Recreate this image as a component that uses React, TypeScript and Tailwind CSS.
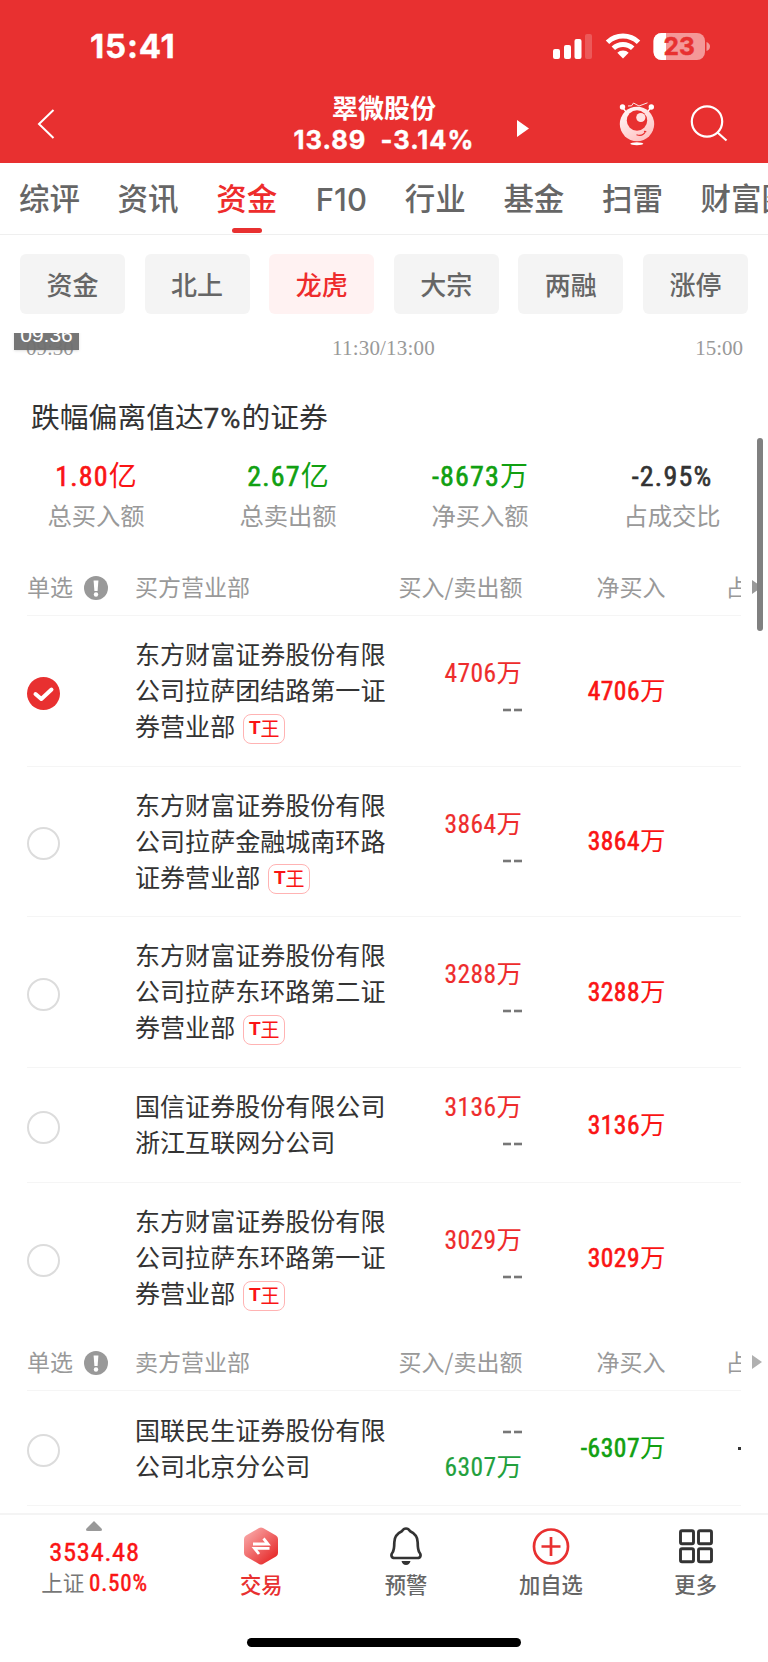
import React from "react";

const sans = "font-['Noto_Sans_CJK_SC',sans-serif]";
const din = "font-['Roboto_Condensed','Noto_Sans_CJK_SC',sans-serif]";
const inter = "font-['Inter','Noto_Sans_CJK_SC',sans-serif]";

function StatusBar() {
  return (
    <div className="flex h-[86px] items-center pt-[7px] pl-[90px] text-white">
      <span className="w-[463px] text-[33px] leading-none font-bold tracking-[0.8px] [-webkit-text-stroke:0.4px_currentColor]">15:41</span>
      <svg className="h-[28px] w-[158px]" viewBox="0 0 158 28" fill="currentColor">
        <rect x="0" y="16" width="7" height="10" rx="2" />
        <rect x="11" y="12" width="7" height="14" rx="2" />
        <rect x="21.500" y="6" width="7" height="20" rx="2" />
        <rect x="32" y="1" width="7" height="25" rx="2" opacity="0.2" />
        <g fill="none" stroke="currentColor" strokeWidth="5">
          <path d="M54.500 9.300 A22.500 22.500 0 0 1 85.500 9.300" />
          <path d="M60.300 15.300 A14 14 0 0 1 79.700 15.300" />
        </g>
        <path d="M70 25.500 L64.300 19.800 A8 8 0 0 1 75.700 19.800 Z" />
        <rect x="100.500" y="0" width="51.500" height="27" rx="8" opacity="0.5" />
        <path d="M113 0 h-4.500 a8 8 0 0 0 -8 8 v11 a8 8 0 0 0 8 8 h4.500 z" />
        <path d="M153.500 9 q3.500 1.500 3.500 4.500 t-3.500 4.500 z" opacity="0.5" />
        <text x="126.200" y="22" fill="#e83030" stroke="#e83030" strokeWidth="0.500" fontSize="24.500" fontWeight="700" textAnchor="middle">23</text>
      </svg>
    </div>
  );
}

function Robot() {
  return (
    <svg className="h-[44px] w-[36px]" viewBox="0 0 36 44" fill="none">
      <defs>
        <linearGradient id="robot" x1="0" y1="0" x2="0.6" y2="1">
          <stop offset="0" stopColor="#fff" />
          <stop offset="1" stopColor="#ffc3c3" />
        </linearGradient>
      </defs>
      <path d="M3.500 5.500 L8 11 M32 5.500 L27.500 11" stroke="#fff" strokeWidth="1.300" />
      <circle cx="3.500" cy="5" r="2.700" fill="#fff" />
      <circle cx="32.300" cy="5" r="2.700" fill="#fff" />
      <path d="M9 4 L12.500 3.800 L14.500 1 L20 4 L28.500 0.800" stroke="#fff" strokeWidth="0.900" />
      <circle cx="18" cy="22" r="17.200" fill="url(#robot)" />
      <circle cx="18" cy="18.500" r="10.200" fill="#e83030" />
      <circle cx="21.800" cy="15.500" r="4.600" fill="#ffe3e3" />
      <path d="M17.500 32.800 Q24 35 26.500 29.300 M25 29.300 L27.300 29.700" stroke="#e83030" strokeWidth="1.200" />
      <ellipse cx="17.800" cy="41.700" rx="6.500" ry="1.500" fill="#fff" />
    </svg>
  );
}

function Header() {
  return (
    <header className={`h-[163px] shrink-0 bg-[#e83030] ${inter}`}>
      <StatusBar />
      <div className="flex h-[77px] text-white">
        <svg className="mt-[23px] ml-[37px] h-[30px] w-[18px]" viewBox="0 0 18 30" fill="none" stroke="currentColor" strokeWidth="2">
          <path d="M16.500 1 L2 15 L16.500 29" />
        </svg>
        <div className="ml-[209px] flex w-[240px] flex-col items-center pt-[6px] font-bold">
          <span className="text-[26px] leading-[34px]">翠微股份</span>
          <span className="mt-[-1px] text-[25.5px] leading-[30px] tracking-[1px] whitespace-pre [-webkit-text-stroke:0.4px_currentColor]">13.89  -3.14%</span>
        </div>
        <svg className="mt-[34px] ml-[13px] h-[17px] w-[12px]" viewBox="0 0 12 17" fill="currentColor">
          <path d="M0 0 L12 8.500 L0 17 Z" />
        </svg>
        <div className="mt-[16px] ml-[90px]">
          <Robot />
        </div>
        <svg className="mt-[19px] ml-[35px] h-[38px] w-[38px]" viewBox="0 0 38 38" fill="none" stroke="currentColor" strokeWidth="2.200">
          <circle cx="17" cy="16.500" r="15.200" />
          <path d="M27.500 27.500 L36.500 35.500" />
        </svg>
      </div>
    </header>
  );
}

const tabs = ["综评", "资讯", "资金", "F10", "行业", "基金", "扫雷", "财富圈"];

function Tabs() {
  return (
    <nav className="flex h-[72px] shrink-0 overflow-hidden border-b border-[#efefef] pl-[19px] text-[30.5px] font-medium text-[#666]">
      {tabs.map((t) =>
        t === "F10" ? (
          <span key={t} className="w-[90px] shrink-0 pl-px font-['Inter'] text-[31px] leading-[73px]">
            {t}
          </span>
        ) : (
          <div key={t} className={`flex w-[98.6px] shrink-0 flex-col whitespace-nowrap ${t === "资金" ? "text-[#ee2c2c]" : ""}`}>
            <span className="h-[65px] leading-[69px]">{t}</span>
            {t === "资金" && <i className="ml-[16px] h-[5px] w-[30px] rounded-full bg-[#e83030]" />}
          </div>
        ),
      )}
    </nav>
  );
}

const chips = ["资金", "北上", "龙虎", "大宗", "两融", "涨停"];

function Chips() {
  return (
    <div className="flex h-[98px] shrink-0 justify-between px-[20px] pt-[19px]">
      {chips.map((c) => (
        <span
          key={c}
          className={`flex h-[60px] w-[105px] items-center justify-center rounded-[6px] pb-[2px] text-[26px] font-medium ${
            c === "龙虎" ? "bg-[#fff2f2] text-[#ee2c2c]" : "bg-[#f4f4f4] text-[#666]"
          }`}
        >
          {c}
        </span>
      ))}
    </div>
  );
}

function TimeAxis() {
  return (
    <div className="relative flex h-[48px] shrink-0 justify-between overflow-hidden pr-[25px] pl-[26px] font-['Liberation_Serif',serif] text-[21px] leading-[31px] text-[#999]">
      <span>09:30</span>
      <span className="mr-[2px] tracking-[0.2px]">11:30/13:00</span>
      <span>15:00</span>
      <span className="absolute -top-[14px] left-[14px] h-[31px] w-[65px] bg-[#6f6f6f]/95 text-center font-['Liberation_Sans'] text-[21px] leading-[32px] text-white shadow">
        09:36
      </span>
    </div>
  );
}

const stats = [
  ["1.80亿", "总买入额", "text-[#fa1414]"],
  ["2.67亿", "总卖出额", "text-[#11a011]"],
  ["-8673万", "净买入额", "text-[#11a011]"],
  ["-2.95%", "占成交比", "text-[#333]"],
];

function Summary() {
  return (
    <section className="h-[149px] shrink-0">
      <h2 className="h-[75px] pl-[31px] text-[28.8px] leading-[70px] text-[#333]">
        跌幅偏离值达<span className="font-['Roboto'] text-[27.5px] tracking-[1px] [-webkit-text-stroke:0.4px_currentColor]">7%</span>的证券
      </h2>
      <div className="grid grid-cols-4">
        {stats.map(([value, label, tone]) => (
          <div key={label} className="flex flex-col items-center">
            <span className={`h-[41px] text-[28px] leading-[42px] tracking-[1.2px] ${din} ${tone}`}>
              <Amount text={value} bold />
            </span>
            <span className="text-[24.3px] leading-[36px] text-[#999]">{label}</span>
          </div>
        ))}
      </div>
    </section>
  );
}

function Amount({ text, bold }: { text: string; bold?: boolean }) {
  const unit = /[亿万]$/.test(text) ? text.slice(-1) : "";
  const digits = unit ? text.slice(0, -1) : text;
  return (
    <>
      <span className={bold ? "[-webkit-text-stroke:0.6px_currentColor]" : "[-webkit-text-stroke:0.2px_currentColor]"}>{digits}</span>
      {unit && <span className="tracking-normal">{unit}</span>}
    </>
  );
}

function TableHead({ title, first }: { title: string; first?: boolean }) {
  return (
    <div className="mr-[27px] ml-[27px] flex h-[58px] shrink-0 items-center border-b border-[#f5f5f5] text-[23px] text-[#999]">
      <span className="w-[57px] whitespace-nowrap">单选</span>
      <svg className="mt-[3px] h-[24px] w-[24px]" viewBox="0 0 24 24">
        <circle cx="12" cy="12" r="12" fill="#999" />
        <path d="M9.600 4.500 h4.800 l-0.800 10.500 h-3.200 z" fill="#fff" />
        <circle cx="12" cy="18.500" r="2.200" fill="#fff" />
      </svg>
      <span className="ml-[27px] w-[240.5px]">{title}</span>
      <span className="w-[147px] text-right whitespace-nowrap">买入/卖出额</span>
      <span className="w-[143px] text-right">净买入</span>
      <span className="ml-[60px] w-[15.5px] overflow-hidden whitespace-nowrap">占比</span>
      <svg className="-mr-[21px] ml-[11px] h-[14px] w-[10px] shrink-0" viewBox="0 0 10 14" fill={first ? "#999" : "#b0b0b0"}>
        <path d="M0 0 L10 7 L0 14 Z" />
      </svg>
    </div>
  );
}

type Row = { lines: string[]; tag?: boolean; buy: string; sell: string; net: string; checked?: boolean };

const buyers: Row[] = [
  { lines: ["东方财富证券股份有限", "公司拉萨团结路第一证", "券营业部"], tag: true, buy: "4706万", sell: "--", net: "4706万", checked: true },
  { lines: ["东方财富证券股份有限", "公司拉萨金融城南环路", "证券营业部"], tag: true, buy: "3864万", sell: "--", net: "3864万" },
  { lines: ["东方财富证券股份有限", "公司拉萨东环路第二证", "券营业部"], tag: true, buy: "3288万", sell: "--", net: "3288万" },
  { lines: ["国信证券股份有限公司", "浙江互联网分公司"], buy: "3136万", sell: "--", net: "3136万" },
  { lines: ["东方财富证券股份有限", "公司拉萨东环路第一证", "券营业部"], tag: true, buy: "3029万", sell: "--", net: "3029万" },
];

const sellers: Row[] = [{ lines: ["国联民生证券股份有限", "公司北京分公司"], buy: "--", sell: "6307万", net: "-6307万" }];

function Value({ text, tone }: { text: string; tone: string }) {
  return text === "--" ? (
    <span className="flex h-[36px] items-center justify-end text-[#777]">
      <svg className="mt-[2px] h-[4px] w-[19px]" viewBox="0 0 19 4" fill="currentColor">
        <rect x="0" y="0.700" width="8" height="2.600" />
        <rect x="11" y="0.700" width="8" height="2.600" />
      </svg>
    </span>
  ) : (
    <span className={`h-[36px] leading-[36px] ${tone}`}>
      <Amount text={text} />
    </span>
  );
}

function BranchRow({ row, last }: { row: Row; last?: boolean }) {
  const height = row.lines.length === 3 ? "h-[150.5px]" : "h-[115px]";
  return (
    <div className={`mx-[27px] flex shrink-0 items-center ${height} ${last ? "" : "border-b border-[#f5f5f5]"}`}>
      <div className="w-[108px] pt-[5px]">
        {row.checked ? (
          <svg className="h-[33px] w-[33px]" viewBox="0 0 33 33">
            <circle cx="16.500" cy="16.500" r="16.500" fill="#e83030" />
            <path d="M8.500 17 L14.300 22 L24.500 12.500" fill="none" stroke="#fff" strokeWidth="4" strokeLinecap="round" strokeLinejoin="round" />
          </svg>
        ) : (
          <i className="block h-[33px] w-[33px] rounded-full border-2 border-[#dcdcdc]" />
        )}
      </div>
      <div className="w-[257px] pb-[3px] text-[25.05px] leading-[36px] text-[#333]">
        {row.lines.map((line, i) => (
          <div key={line} className="flex h-[36px] items-center whitespace-nowrap">
            {line}
            {row.tag && i === row.lines.length - 1 && (
              <span className="mt-[7px] ml-[8px] flex h-[30px] w-[42px] items-center justify-center rounded-[8px] border border-[#ffb3b3] pb-[2px] text-[19px] text-[#fa1414]">
                <b className="font-['Liberation_Sans'] text-[19px]">T</b>王
              </span>
            )}
          </div>
        ))}
      </div>
      <div className={`flex w-[130px] flex-col pt-[1px] text-right text-[25.5px] tracking-[0.4px] ${din}`}>
        <Value text={row.buy} tone="text-[#ee2c2c]" />
        <Value text={row.sell} tone="text-[#22a03c]" />
      </div>
      <div className={`w-[143.5px] text-right text-[25.5px] leading-[36px] tracking-[0.5px] ${din} ${row.net[0] === "-" ? "text-[#11a011]" : "text-[#fa1414]"}`}>
        <Amount text={row.net} bold />
      </div>
      {row.net[0] === "-" && <i className="mb-[-1px] ml-auto h-[3px] w-[3px] bg-[#333]" />}
    </div>
  );
}

function BarItem({ label, tone, children }: { label: string; tone: string; children: React.ReactNode }) {
  return (
    <div className={`flex w-[144.800px] flex-col items-center pt-[12px] text-[21.3px] font-medium ${tone}`}>
      <div className="h-[41px]">{children}</div>
      <span className="leading-[32px]">{label}</span>
    </div>
  );
}

function BottomBar() {
  return (
    <footer className="flex h-[149px] shrink-0 flex-col border-t-2 border-[#f4f4f4]">
      <div className="flex h-[123px]">
        <div className={`flex w-[189px] flex-col items-center pt-[6px] ${din}`}>
          <svg className="h-[10px] w-[16px]" viewBox="0 0 16 10" fill="#999">
            <path d="M8 0 L15.500 7.500 Q17 10 14 10 H2 Q-1 10 0.500 7.500 Z" />
          </svg>
          <span className="mt-[3px] text-[26.5px] leading-[36px] tracking-[0.7px] text-[#fa1414] [-webkit-text-stroke:0.4px_currentColor]">3534.48</span>
          <span className="mt-[-2px] text-[21.5px] leading-[32px] text-[#777]">
            上证 <span className="text-[23px] tracking-[0.8px] text-[#fa1414] [-webkit-text-stroke:0.5px_currentColor]">0.50%</span>
          </span>
        </div>
        <BarItem label="交易" tone="text-[#e83030]">
          <svg className="h-[38px] w-[34px]" viewBox="0 0 34 38">
            <defs>
              <linearGradient id="hex" x1="0" y1="0" x2="0.9" y2="1">
                <stop offset="0" stopColor="#fbb5b5" />
                <stop offset="1" stopColor="#e51f1f" />
              </linearGradient>
            </defs>
            <path d="M15 1 Q17 0 19 1 L32 8.500 Q34 9.500 34 12 V26 Q34 28.500 32 29.500 L19 37 Q17 38 15 37 L2 29.500 Q0 28.500 0 26 V12 Q0 9.500 2 8.500 Z" fill="url(#hex)" />
            <path d="M9 17 H24 L19.500 11.500 M25.500 21.300 H10.500 L15 27" fill="none" stroke="#fff" strokeWidth="2.800" />
          </svg>
        </BarItem>
        <BarItem label="预警" tone="text-[#666]">
          <svg className="h-[38px] w-[32px]" viewBox="0 0 32 38">
            <path d="M16 1.500 C14 1.500 12.800 2.700 11.800 4.300 C6.500 6.800 4.300 10.500 4.300 15.500 C4.300 22 4 23.500 2.500 25.500 C0.500 28 1.500 31 4.500 31 H27.500 C30.500 31 31.500 28 29.500 25.500 C28 23.500 27.700 22 27.700 15.500 C27.700 10.500 25.500 6.800 20.200 4.300 C19.200 2.700 18 1.500 16 1.500 Z" fill="none" stroke="#333" strokeWidth="2.700" />
            <path d="M11.500 34 H20.500 Q19.500 38 16 38 Q12.500 38 11.500 34 Z" fill="#333" />
          </svg>
        </BarItem>
        <BarItem label="加自选" tone="text-[#666]">
          <svg className="h-[38px] w-[38px]" viewBox="0 0 38 38" fill="none" stroke="#e83030" strokeWidth="2.700">
            <circle cx="19" cy="19.500" r="17" />
            <path d="M9.500 19.500 H28.500 M19 10 V29" />
          </svg>
        </BarItem>
        <BarItem label="更多" tone="text-[#666]">
          <svg className="h-[38px] w-[36px]" viewBox="0 0 36 38" fill="none" stroke="#333" strokeWidth="2.900">
            <rect x="2.500" y="3.700" width="13" height="13" rx="1.500" />
            <rect x="20.500" y="3.700" width="13" height="13" rx="1.500" />
            <rect x="2.500" y="21.700" width="13" height="13" rx="1.500" />
            <rect x="20.500" y="21.700" width="13" height="13" rx="1.500" />
          </svg>
        </BarItem>
      </div>
      <div className="mx-auto h-[9px] w-[274px] rounded-full bg-black" />
    </footer>
  );
}

export default function App() {
  return (
    <div className={`relative flex h-[1662px] w-[768px] flex-col overflow-hidden bg-white ${sans}`}>
      <Header />
      <Tabs />
      <Chips />
      <TimeAxis />
      <Summary />
      <div className="h-[28px] shrink-0" />
      <TableHead title="买方营业部" first />
      {buyers.map((row, i) => (
        <BranchRow key={row.net} row={row} last={i === buyers.length - 1} />
      ))}
      <TableHead title="卖方营业部" />
      {sellers.map((row) => (
        <BranchRow key={row.net} row={row} />
      ))}
      <div className="flex-1" />
      <BottomBar />
      <i className="absolute top-[438px] right-[5px] h-[193px] w-[6px] rounded-full bg-[#808080]" />
    </div>
  );
}
